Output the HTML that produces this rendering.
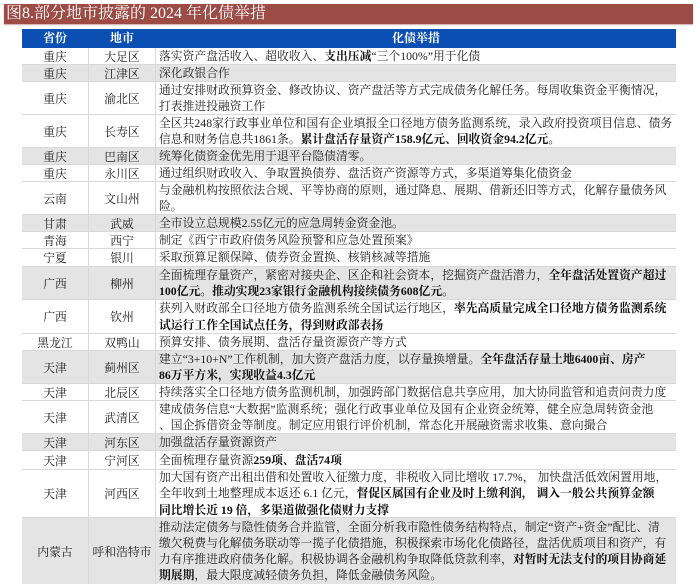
<!DOCTYPE html>
<html><head><meta charset="utf-8"><style>
*{margin:0;padding:0;box-sizing:border-box}
body{width:700px;height:584px;background:#fff;position:relative;overflow:hidden;font-family:"Liberation Serif","Noto Serif CJK SC",serif;color:#222}
.title{position:absolute;left:4px;top:4px;width:689px;height:20px;background:#9c4b45;color:#fff;font-size:16px;line-height:20px;padding-left:2px;white-space:nowrap;box-shadow:0 1px 1px #caa}
.hdr{position:absolute;left:22px;top:29px;width:654px;height:19px;background:#0b4fb3;color:#fff;font-size:12px;font-weight:bold;line-height:19px}
.hdr span{position:absolute;text-align:center}
.row{position:absolute;left:22px;width:654px;border-bottom:1px solid #d8d8d8;font-size:11.8px}
.g{background:#e4e4e4}
.c{position:absolute;top:0;bottom:0;display:flex;align-items:center;justify-content:center;white-space:nowrap}
.c1{left:0;width:66px}
.c2{left:66px;width:68px;border-left:1px solid #d8d8d8;border-right:1px solid #d8d8d8}
.c3{left:134px;right:0;justify-content:flex-start;padding-left:3px;line-height:16.2px}
b{font-weight:bold;color:#111}
</style></head><body>
<div class="title">图8.部分地市披露的 2024 年化债举措</div>
<div class="hdr"><span style="left:0;width:66px">省份</span><span style="left:66px;width:68px">地市</span><span style="left:134px;width:520px">化债举措</span></div>

<div class="row" style="top:48px;height:17px"><div class="c c1">重庆</div><div class="c c2">大足区</div><div class="c c3"><div>落实资产盘活收入、超收收入、<b>支出压减</b>“三个100%”用于化债</div></div></div>
<div class="row g" style="top:65px;height:17px"><div class="c c1">重庆</div><div class="c c2">江津区</div><div class="c c3"><div>深化政银合作</div></div></div>
<div class="row" style="top:82px;height:33px"><div class="c c1">重庆</div><div class="c c2">渝北区</div><div class="c c3"><div>通过安排财政预算资金、修改协议、资产盘活等方式完成债务化解任务。每周收集资金平衡情况，<br>打表推进投融资工作</div></div></div>
<div class="row" style="top:115px;height:33px"><div class="c c1">重庆</div><div class="c c2">长寿区</div><div class="c c3"><div>全区共248家行政事业单位和国有企业填报全口径地方债务监测系统，录入政府投资项目信息、债务<br>信息和财务信息共1861条。<b>累计盘活存量资产158.9亿元、回收资金94.2亿元。</b></div></div></div>
<div class="row g" style="top:148px;height:17px"><div class="c c1">重庆</div><div class="c c2">巴南区</div><div class="c c3"><div>统筹化债资金优先用于退平台隐债清零。</div></div></div>
<div class="row" style="top:165px;height:17px"><div class="c c1">重庆</div><div class="c c2">永川区</div><div class="c c3"><div>通过组织财政收入、争取置换债券、盘活资产资源等方式，多渠道筹集化债资金</div></div></div>
<div class="row" style="top:182px;height:33px"><div class="c c1">云南</div><div class="c c2">文山州</div><div class="c c3"><div>与金融机构按照依法合规、平等协商的原则，通过降息、展期、借新还旧等方式，化解存量债务风<br>险。</div></div></div>
<div class="row g" style="top:215px;height:17px"><div class="c c1">甘肃</div><div class="c c2">武威</div><div class="c c3"><div>全市设立总规模2.55亿元的应急周转金资金池。</div></div></div>
<div class="row" style="top:232px;height:17px"><div class="c c1">青海</div><div class="c c2">西宁</div><div class="c c3"><div>制定《西宁市政府债务风险预警和应急处置预案》</div></div></div>
<div class="row" style="top:249px;height:18px"><div class="c c1">宁夏</div><div class="c c2">银川</div><div class="c c3"><div>采取预算足额保障、债券资金置换、核销核减等措施</div></div></div>
<div class="row g" style="top:267px;height:33px"><div class="c c1">广西</div><div class="c c2">柳州</div><div class="c c3"><div>全面梳理存量资产，紧密对接央企、区企和社会资本，挖掘资产盘活潜力，<b>全年盘活处置资产超过<br>100亿元。推动实现23家银行金融机构接续债务608亿元。</b></div></div></div>
<div class="row" style="top:300px;height:34px"><div class="c c1">广西</div><div class="c c2">钦州</div><div class="c c3"><div>获列入财政部全口径地方债务监测系统全国试运行地区，<b>率先高质量完成全口径地方债务监测系统<br>试运行工作全国试点任务，得到财政部表扬</b></div></div></div>
<div class="row" style="top:334px;height:17px"><div class="c c1">黑龙江</div><div class="c c2">双鸭山</div><div class="c c3"><div>预算安排、债务展期、盘活存量资源资产等方式</div></div></div>
<div class="row g" style="top:351px;height:33px"><div class="c c1">天津</div><div class="c c2">蓟州区</div><div class="c c3"><div>建立“3+10+N”工作机制，加大资产盘活力度，以存量换增量。<b>全年盘活存量土地6400亩、房产<br>86万平方米，实现收益4.3亿元</b></div></div></div>
<div class="row" style="top:384px;height:17px"><div class="c c1">天津</div><div class="c c2">北辰区</div><div class="c c3"><div>持续落实全口径地方债务监测机制，加强跨部门数据信息共享应用，加大协同监管和追责问责力度</div></div></div>
<div class="row" style="top:401px;height:33px"><div class="c c1">天津</div><div class="c c2">武清区</div><div class="c c3"><div>建成债务信息“大数据”监测系统；强化行政事业单位及国有企业资金统筹，健全应急周转资金池<br>、国企拆借资金等制度。制定应用银行评价机制，常态化开展融资需求收集、意向撮合</div></div></div>
<div class="row g" style="top:434px;height:17px"><div class="c c1">天津</div><div class="c c2">河东区</div><div class="c c3"><div>加强盘活存量资源资产</div></div></div>
<div class="row" style="top:451px;height:19px"><div class="c c1">天津</div><div class="c c2">宁河区</div><div class="c c3"><div>全面梳理存量资源<b>259项、盘活74项</b></div></div></div>
<div class="row" style="top:470px;height:48px"><div class="c c1">天津</div><div class="c c2">河西区</div><div class="c c3"><div>加大国有资产出租出借和处置收入征缴力度，非税收入同比增收 17.7%， 加快盘活低效闲置用地，<br>全年收到土地整理成本返还 6.1 亿元，<b>督促区属国有企业及时上缴利润， 调入一般公共预算金额<br>同比增长近 19 倍，多渠道做强化债财力支撑</b></div></div></div>
<div class="row g" style="top:518px;height:66px;border-bottom:none"><div class="c c1">内蒙古</div><div class="c c2">呼和浩特市</div><div class="c c3"><div>推动法定债务与隐性债务合并监管，全面分析我市隐性债务结构特点，制定“资产+资金”配比、清<br>缴欠税费与化解债务联动等一揽子化债措施，积极探索市场化化债路径，盘活优质项目和资产，有<br>力有序推进政府债务化解。积极协调各金融机构争取降低贷款利率，<b>对暂时无法支付的项目协商延<br>期展期</b>，最大限度减轻债务负担，降低金融债务风险。</div></div></div>
</body></html>
